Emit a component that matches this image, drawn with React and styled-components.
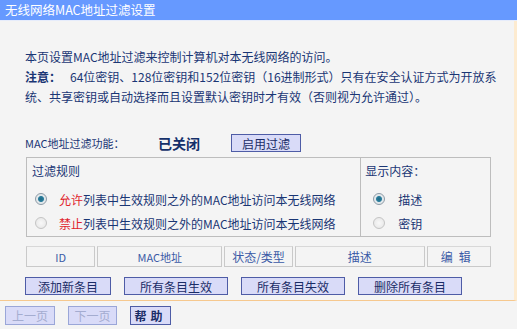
import React from 'react'
import styled, { createGlobalStyle } from 'styled-components'

const GlobalStyle = createGlobalStyle`
	html, body {
		margin: 0;
		padding: 0;
		background: #f4f4f4;
	}
	body {
		font-family: "Noto Sans CJK SC", "Liberation Sans", sans-serif;
		font-size: 12px;
		color: #1a3674;
	}
`

const Page = styled.div`
	width: 517px;
	height: 329px;
	display: flex;
	flex-direction: column;
	background: #f4f4f4;
	overflow: hidden;
`

const TitleBar = styled.div`
	height: 20px;
	line-height: 19px;
	padding-left: 5px;
	background: #6699ff;
	border-bottom: 1px solid #e6ecfb;
	color: #ffffff;
	font-size: 12.5px;
`

const Main = styled.div`
	flex: 1;
	display: flex;
	flex-direction: column;
	padding: 26px 0 0 25px;
	border-right: 3px solid #fdebd0;
	border-bottom: 1px solid #f6c88e;
`

const Para = styled.div`
	line-height: 20px;
	white-space: nowrap;
`

const Strong = styled.b`
	margin-right: 9px;
`

const StatusRow = styled.div`
	display: flex;
	align-items: center;
	height: 20px;
	margin-top: 26px;
`

const Label = styled.span`
	width: 133px;
	font-size: 11px;
`

const State = styled.span`
	width: 73px;
	font-size: 14px;
	font-weight: bold;
	color: #15306a;
`

const Btn = styled.button`
	box-sizing: border-box;
	width: ${p => p.w}px;
	height: ${p => p.h || 18}px;
	padding: 0;
	background: #d9dbf8;
	border: 1px solid #4e5ca6;
	font-family: "Noto Sans CJK SC", "Liberation Sans", sans-serif;
	font-size: 12px;
	font-weight: ${p => (p.bold ? 'bold' : 'normal')};
	letter-spacing: ${p => p.spacing || 0}px;
	color: ${p => (p.disabled ? '#a4acd0' : '#1a2c66')};
	border-color: ${p => (p.disabled ? '#9aa6d8' : '#4e5ca6')};
`

const Groups = styled.div`
	display: flex;
	margin: 4px 0 0 1px;
	width: 465px;
	height: 80px;
	border: 1px solid #bdbdbd;
	box-sizing: border-box;
`

const Group = styled.div`
	width: ${p => p.w}px;
	box-sizing: border-box;
	border-left: ${p => (p.divide ? '1px solid #bdbdbd' : 'none')};
	padding: 4px 0 0 ${p => p.left}px;
	display: flex;
	flex-direction: column;
`

const GroupTitle = styled.div`
	height: 20px;
	line-height: 18px;
	margin-bottom: 5px;
`

const Option = styled.label`
	display: flex;
	align-items: center;
	height: 24px;
	padding-left: ${p => p.indent}px;
	gap: ${p => p.gap}px;
`

const Radio = styled.span`
	width: 10px;
	height: 10px;
	border-radius: 50%;
	border: 1px solid ${p => (p.on ? '#8c9aa6' : '#c4c4c4')};
	background: ${p =>
		p.on
			? 'radial-gradient(circle, #1f6a86 0, #2a7d9c 2.5px, #dfe6ea 3.5px, #f2f2f2 100%)'
			: 'radial-gradient(circle, #f8f8f8 0, #e4e4e4 100%)'};
	flex: none;
`

const Red = styled.span`
	color: #e0232b;
`

const Table = styled.div`
	display: flex;
	gap: 2px;
	margin: 9px 0 0 1px;
	width: 465px;
	height: 21px;
`

const Cell = styled.div`
	width: ${p => p.w}px;
	box-sizing: border-box;
	border: 1px solid #c9c9c9;
	border-top-color: #d8d8d8;
	display: flex;
	align-items: center;
	justify-content: center;
	color: #3a5aa6;
	font-size: ${p => p.fs || 12}px;
	letter-spacing: ${p => p.spacing || 0}px;
`

const Actions = styled.div`
	display: flex;
	gap: 13px;
	margin-top: 10px;
`

const Footer = styled.div`
	display: flex;
	gap: 13px;
	padding: 5px 0 0 5px;
	height: 23px;
`

export default function App() {
	return (
		<Page>
			<GlobalStyle />
			<TitleBar>无线网络MAC地址过滤设置</TitleBar>
			<Main>
				<Para>本页设置MAC地址过滤来控制计算机对本无线网络的访问。</Para>
				<Para>
					<Strong>注意：</Strong>
					64位密钥、128位密钥和152位密钥（16进制形式）只有在安全认证方式为开放系
				</Para>
				<Para>统、共享密钥或自动选择而且设置默认密钥时才有效（否则视为允许通过）。</Para>
				<StatusRow>
					<Label>MAC地址过滤功能：</Label>
					<State>已关闭</State>
					<Btn w={70}>启用过滤</Btn>
				</StatusRow>
				<Groups>
					<Group w={334} left={5}>
						<GroupTitle>过滤规则</GroupTitle>
						<Option indent={3} gap={12}>
							<Radio on />
							<span>
								<Red>允许</Red>列表中生效规则之外的MAC地址访问本无线网络
							</span>
						</Option>
						<Option indent={3} gap={12}>
							<Radio />
							<span>
								<Red>禁止</Red>列表中生效规则之外的MAC地址访问本无线网络
							</span>
						</Option>
					</Group>
					<Group w={130} divide left={4}>
						<GroupTitle>显示内容：</GroupTitle>
						<Option indent={8} gap={13}>
							<Radio on />
							<span>描述</span>
						</Option>
						<Option indent={8} gap={13}>
							<Radio />
							<span>密钥</span>
						</Option>
					</Group>
				</Groups>
				<Table>
					<Cell w={70} fs={11}>ID</Cell>
					<Cell w={126} fs={11}>MAC地址</Cell>
					<Cell w={69}>状态/类型</Cell>
					<Cell w={131}>描述</Cell>
					<Cell w={65} spacing={6}>编辑</Cell>
				</Table>
				<Actions>
					<Btn w={86}>添加新条目</Btn>
					<Btn w={104}>所有条目生效</Btn>
					<Btn w={104}>所有条目失效</Btn>
					<Btn w={104}>删除所有条目</Btn>
				</Actions>
			</Main>
			<Footer>
				<Btn w={50} h={19} disabled>上一页</Btn>
				<Btn w={49} h={19} disabled>下一页</Btn>
				<Btn w={41} h={19} bold spacing={4}>帮助</Btn>
			</Footer>
		</Page>
	)
}
